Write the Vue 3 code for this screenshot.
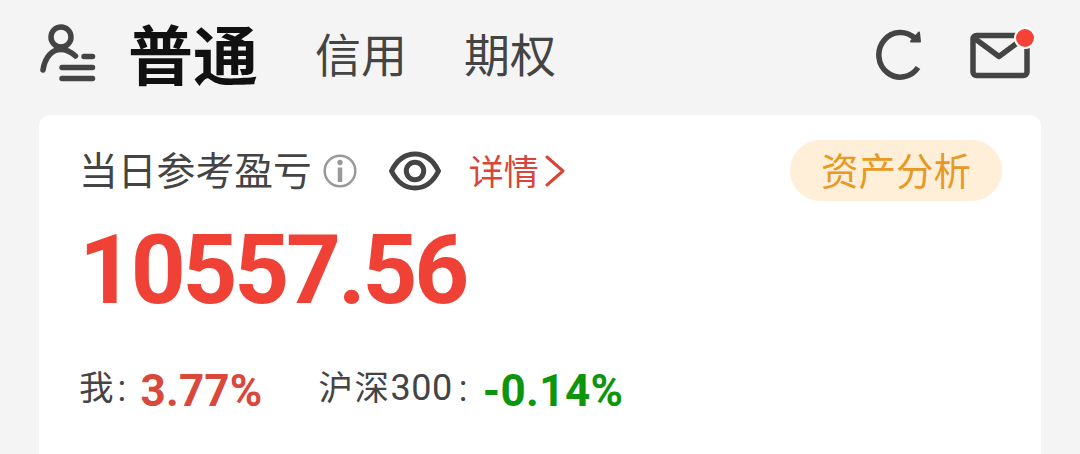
<template>
  <div class="page">
    <header class="top-bar">
      <svg class="icon-user" width="58" height="60" viewBox="0 0 58 60" fill="none">
        <circle cx="22" cy="13" r="10" />
        <path d="M4 46C6 33 13 25.500 22 25.500C27 25.500 32 28 36.500 32" />
        <path d="M45 32.500H53.500M23 43.500H53.500M23 54.500H53.500" />
      </svg>
      <nav class="tabs">
        <span
          v-for="tab in tabs"
          :key="tab"
          class="tab"
          :class="{ active: tab === currentTab }"
          @click="currentTab = tab"
        >{{ tab }}</span>
      </nav>
      <svg class="icon-refresh" width="48" height="52" viewBox="0 0 48 52" fill="none">
        <path d="M43 39.500A21.500 22.300 0 1 1 40 10.500" />
        <path class="arrow" d="M44 4.500L45 13.500L36 13.500Z" />
      </svg>
      <div class="mail">
        <svg width="60" height="48" viewBox="0 0 60 48" fill="none">
          <rect x="3" y="4.500" width="54" height="40" rx="3.500" />
          <path d="M4 7L29 25.500L54 7" />
        </svg>
        <i class="dot"></i>
      </div>
    </header>

    <main class="card">
      <div class="row-title">
        <span class="label">当日参考盈亏</span>
        <svg class="icon-info" width="34" height="34" viewBox="0 0 34 34" fill="none">
          <circle cx="17" cy="17" r="15.300" />
          <circle class="fill" cx="17" cy="8.500" r="2.700" />
          <path d="M17 13.500V28" />
        </svg>
        <svg class="icon-eye" width="52" height="40" viewBox="0 0 52 40" fill="none">
          <path d="M2.500 20C8 9 16 3 26 3S44 9 49.500 20C44 31 36 37 26 37S8 31 2.500 20Z" />
          <circle cx="26" cy="20" r="8.700" />
        </svg>
        <span class="detail">详情</span>
        <svg class="icon-arrow" width="20" height="32" viewBox="0 0 20 32" fill="none">
          <path d="M2 2L18 16L2 30" />
        </svg>
        <button class="analysis">资产分析</button>
      </div>
      <div class="amount">10557.56</div>
      <div class="row-rate">
        <span class="name">我</span>
        <span class="colon">:</span>
        <span class="rate up">3.77%</span>
        <span class="name index">沪深<span class="num">300</span></span>
        <span class="colon">:</span>
        <span class="rate down">-0.14%</span>
      </div>
    </main>
  </div>
</template>

<script setup>
import { ref } from 'vue'

const tabs = ['普通', '信用', '期权']
const currentTab = ref('普通')
</script>

<style>
body {
  background: #f4f4f4;
}
</style>

<style scoped>
.page {
  height: 454px;
  overflow: hidden;
  box-sizing: border-box;
  padding: 0 39px;
  background: #f4f4f4;
  color: #444;
  font-family: 'Noto Sans CJK SC', sans-serif;
  white-space: nowrap;
}

svg {
  display: block;
  flex: none;
  stroke: #444;
  stroke-width: 5.5;
  stroke-linecap: round;
  stroke-linejoin: round;
}

.top-bar {
  display: flex;
  align-items: center;
  height: 115px;
  padding-bottom: 6px;
  box-sizing: border-box;
}

.icon-user {
  margin-bottom: 1px;
}

.tabs {
  display: flex;
  align-items: center;
  flex: 1;
  margin-left: 31px;
  padding-bottom: 5px;
  gap: 57px;
}

.tab {
  font-size: 46px;
  line-height: 70px;
  cursor: pointer;
}

.tab.active {
  color: #111;
  font-size: 65px;
  font-weight: 700;
}

.icon-refresh {
  margin-bottom: 2px;
  stroke-linecap: butt;
}

.icon-refresh .arrow {
  fill: #444;
  stroke-width: 2;
}

.mail {
  position: relative;
  margin: 0 11px 0 47px;
}

.dot {
  position: absolute;
  top: -4px;
  right: -6px;
  width: 18px;
  height: 18px;
  border: 2px solid #fff;
  border-radius: 50%;
  background: #f44336;
}

.card {
  width: 1002px;
  height: 350px;
  box-sizing: border-box;
  padding: 25px 39px 0 40px;
  border-radius: 12px;
  background: #fff;
}

.row-title {
  display: flex;
  align-items: center;
  height: 61px;
}

.label {
  padding-bottom: 5px;
  font-size: 38.8px;
}

.icon-info {
  margin-left: 11px;
  stroke: #999;
  stroke-width: 2.5;
}

.icon-info path {
  stroke-width: 4.5;
  stroke-linecap: butt;
}

.icon-info .fill {
  fill: #999;
  stroke: none;
}

.icon-eye {
  margin-left: 32px;
  stroke-width: 5;
}

.detail {
  margin-left: 28px;
  padding-bottom: 2px;
  color: #d8453a;
  font-size: 35px;
}

.icon-arrow {
  margin-left: 6px;
  stroke: #d8453a;
  stroke-width: 3;
}

.analysis {
  width: 212px;
  height: 61px;
  margin-left: auto;
  padding: 0 0 4px;
  border: 0;
  border-radius: 31px;
  background: #ffefd9;
  color: #e69a24;
  font-family: inherit;
  font-size: 37.5px;
  line-height: 57px;
}

.amount {
  margin-top: 13px;
  color: #ef4136;
  font-family: Roboto, sans-serif;
  font-size: 96px;
  font-weight: 700;
  line-height: 112px;
  letter-spacing: -3.3px;
}

.row-rate {
  display: flex;
  align-items: center;
  height: 60px;
  margin-top: 33px;
}

.name {
  padding-bottom: 8px;
  font-size: 34.5px;
}

.num,
.colon {
  font-family: Roboto, sans-serif;
  font-size: 36px;
}

.num {
  letter-spacing: 0.5px;
}

.colon {
  width: 9px;
  margin-left: 4px;
}

.rate {
  margin: 3px 0 0 14px;
  font-family: Roboto, sans-serif;
  font-size: 44px;
  font-weight: 700;
  letter-spacing: 0.2px;
}

.index {
  margin-left: 56px;
  letter-spacing: 1.5px;
}

.index + .colon {
  margin-left: 6px;
}

.up {
  color: #d9483b;
}

.down {
  margin-left: 15px;
  color: #0d960d;
  letter-spacing: 0.4px;
}
</style>
